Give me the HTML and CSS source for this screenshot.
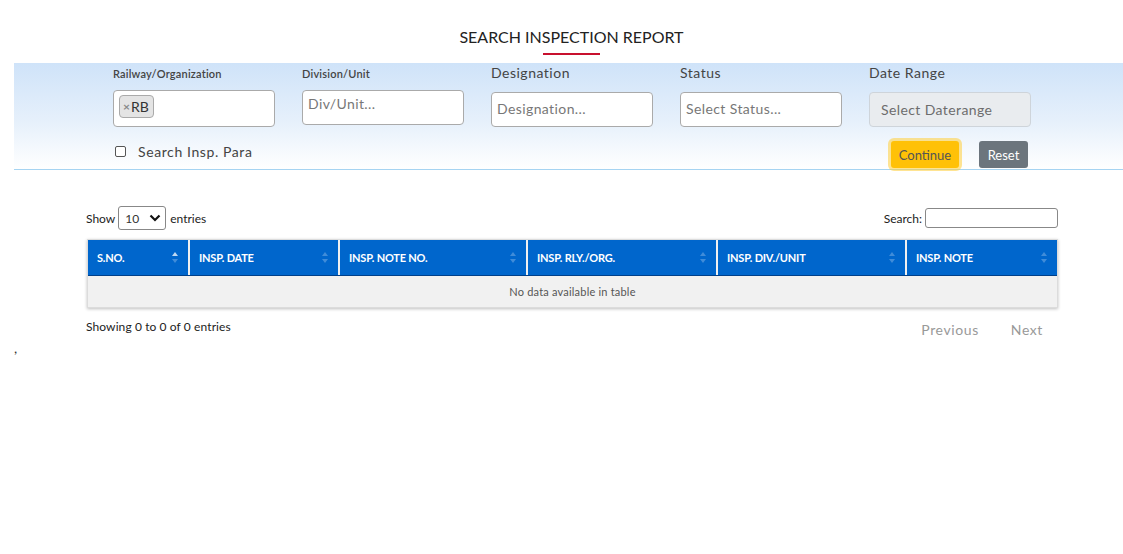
FILE: index.html
```html
<!DOCTYPE html>
<html>
<head>
<meta charset="utf-8">
<link rel="stylesheet" href="styles.css">
</head>
<body>
<div class="page">
  <div class="title-wrap">
    <h1 class="title">SEARCH INSPECTION REPORT</h1>
    <div class="title-bar"></div>
  </div>

  <div class="filters">
    <div class="grid">
      <div class="field">
        <label class="lbl-sm">Railway/Organization</label>
        <div class="multi"><span class="chip"><span class="x">×</span>RB</span></div>
      </div>
      <div class="field">
        <label class="lbl-sm">Division/Unit</label>
        <div class="box box-a">Div/Unit...</div>
      </div>
      <div class="field">
        <label class="lbl">Designation</label>
        <div class="box">Designation...</div>
      </div>
      <div class="field">
        <label class="lbl">Status</label>
        <div class="box">Select Status...</div>
      </div>
      <div class="field">
        <label class="lbl">Date Range</label>
        <div class="box box-date">Select Daterange</div>
      </div>
    </div>
    <div class="actions">
      <label class="check"><span class="cb"></span>Search Insp. Para</label>
      <div class="btns">
        <button class="btn btn-continue">Continue</button>
        <button class="btn btn-reset">Reset</button>
      </div>
    </div>
  </div>

  <div class="dt">
    <div class="dt-top">
      <div class="length">Show <span class="sel">10<svg width="12" height="8" viewBox="0 0 12 8"><path d="M1.5 1.5 6 6l4.5-4.5" fill="none" stroke="#111" stroke-width="2.2"/></svg></span> entries</div>
      <div class="search">Search: <span class="search-input"></span></div>
    </div>
    <div class="table">
      <div class="thead">
        <div class="th w1">S.NO.<span class="sort asc"></span></div>
        <div class="th w2">INSP. DATE<span class="sort"></span></div>
        <div class="th w3">INSP. NOTE NO.<span class="sort"></span></div>
        <div class="th w4">INSP. RLY./ORG.<span class="sort"></span></div>
        <div class="th w5">INSP. DIV./UNIT<span class="sort"></span></div>
        <div class="th w6">INSP. NOTE<span class="sort"></span></div>
      </div>
      <div class="empty">No data available in table</div>
    </div>
    <div class="dt-bottom">
      <div class="info">Showing 0 to 0 of 0 entries</div>
      <div class="paging"><span>Previous</span><span>Next</span></div>
    </div>
  </div>
  <div class="comma">,</div>
</div>
</body>
</html>
```

FILE: styles.css
```css
* { box-sizing: border-box; }
html, body { margin: 0; padding: 0; background: #fff; }
body { font-family: "Lato", "Noto Sans", sans-serif; color: #333; }

.page { padding-top: 27px; }

.title-wrap { display: flex; flex-direction: column; align-items: center; padding-left: 20px; }
.title { margin: 0; font-size: 16px; line-height: 20px; font-weight: 400; color: #222; letter-spacing: 0; }
.title-bar { width: 57px; height: 2px; background: #c8102e; margin-top: 6px; }

.filters {
  margin-top: 8px;
  margin-left: 14px;
  padding: 4px 0 1px 99px;
  background: linear-gradient(to bottom, #cfe3f9 0%, #e6f0fb 55%, #ffffff 100%);
  border-bottom: 1px solid #a6d4f2;
}
.grid { display: grid; grid-template-columns: repeat(5, 162px); column-gap: 27px; width: 918px; }
.field { display: flex; flex-direction: column; }
.field label { display: block; height: 23px; color: #444; }
.lbl-sm { font-size: 11px; line-height: 14px; font-weight: 600; letter-spacing: 0.2px; }
.lbl { font-size: 14px; line-height: 11px; margin-bottom: 2px; letter-spacing: 0.5px; }

.multi { height: 37px; border: 1px solid #aaa; border-radius: 4px; background: #fff; padding: 4px 5px; }
.chip { display: inline-flex; align-items: center; height: 23px; padding: 0 4px 0 3px; background: #e4e4e4; border: 1px solid #aaa; border-radius: 4px; font-size: 14px; color: #333; }
.chip .x { color: #888; font-size: 12px; margin-right: 1px; font-weight: 700; }

.box { height: 35px; border: 1px solid #aaa; border-radius: 4px; background: #fff; font-size: 14px; color: #777; padding: 7px 5px; line-height: 17px; letter-spacing: 0.4px; }
.box-a { padding-top: 4px; }
.box-date { background: #e9ecef; border-color: #ced4da; padding-left: 11px; color: #6d6d6d; padding-top: 8px; }

.actions { display: flex; align-items: flex-start; justify-content: space-between; width: 918px; margin-top: 14px; height: 27px; }
.check { display: flex; align-items: center; font-size: 14px; color: #444; padding-left: 2px; margin-top: 2px; letter-spacing: 0.6px; }
.cb { width: 11px; height: 11px; border: 1px solid #555; border-radius: 2px; background: #fff; margin-right: 12px; }
.btns { display: flex; gap: 20px; margin-right: 3px; }
.btn { font-family: inherit; font-size: 13px; height: 27px; border: none; border-radius: 3px; padding: 0; }
.btn-continue { background: #ffc107; color: #555; width: 68px; box-shadow: 0 0 0 3px rgba(255, 205, 57, 0.55); }
.btn-reset { background: #6c757d; color: #fff; width: 49px; }

.dt { margin-left: 86px; width: 972px; margin-top: 36px; }
.dt-top { display: flex; justify-content: space-between; align-items: center; height: 24px; }
.length { display: flex; align-items: center; font-size: 12px; color: #222; }
.sel { display: inline-flex; align-items: center; justify-content: space-between; width: 48px; height: 24px; border: 1px solid #888; border-radius: 3px; margin: 0 4px 0 3px; padding: 0 4px 0 6px; font-size: 12px; color: #333; }
.search { display: flex; align-items: center; font-size: 12px; color: #222; }
.search-input { display: inline-block; width: 133px; height: 20px; border: 1px solid #888; border-radius: 3px; margin-left: 3px; }

.table { margin-top: 9px; margin-left: 1px; width: 971px; border: 1px solid #dcdcdc; box-shadow: 0 1px 3px rgba(0,0,0,0.25); }
.thead { display: flex; background: #0066cc; border-bottom: 1px solid #00408a; height: 36px; }
.th { position: relative; display: flex; align-items: center; padding-left: 9px; color: #fff; font-size: 11px; font-weight: 700; border-right: 2px solid #f0f0f0; letter-spacing: -0.2px; }
.th:last-child { border-right: none; }
.w1 { width: 102px; } .w2 { width: 150px; } .w3 { width: 188px; } .w4 { width: 190px; } .w5 { width: 189px; } .w6 { flex: 1; }
.sort { position: absolute; right: 10px; top: 12px; width: 6px; height: 11px; }
.sort::before, .sort::after { content: ""; position: absolute; left: 0; border-left: 3px solid transparent; border-right: 3px solid transparent; }
.sort::before { top: 0; border-bottom: 4px solid rgba(255,255,255,0.25); }
.sort::after { bottom: 0; border-top: 4px solid rgba(255,255,255,0.25); }
.sort.asc::before { border-bottom-color: rgba(255,255,255,0.75); }
.empty { height: 31px; background: #f1f1f1; font-size: 11px; color: #555; display: flex; align-items: center; justify-content: center; letter-spacing: 0.2px; }

.dt-bottom { display: flex; justify-content: space-between; margin-top: 11px; }
.info { font-size: 12px; color: #222; line-height: 15px; letter-spacing: 0.1px; }
.paging { display: flex; gap: 32px; font-size: 14px; color: #999; margin-top: 2px; margin-right: 15px; letter-spacing: 0.6px; }

.comma { margin-left: 14px; margin-top: 3px; font-size: 14px; line-height: 14px; color: #333; }
```
